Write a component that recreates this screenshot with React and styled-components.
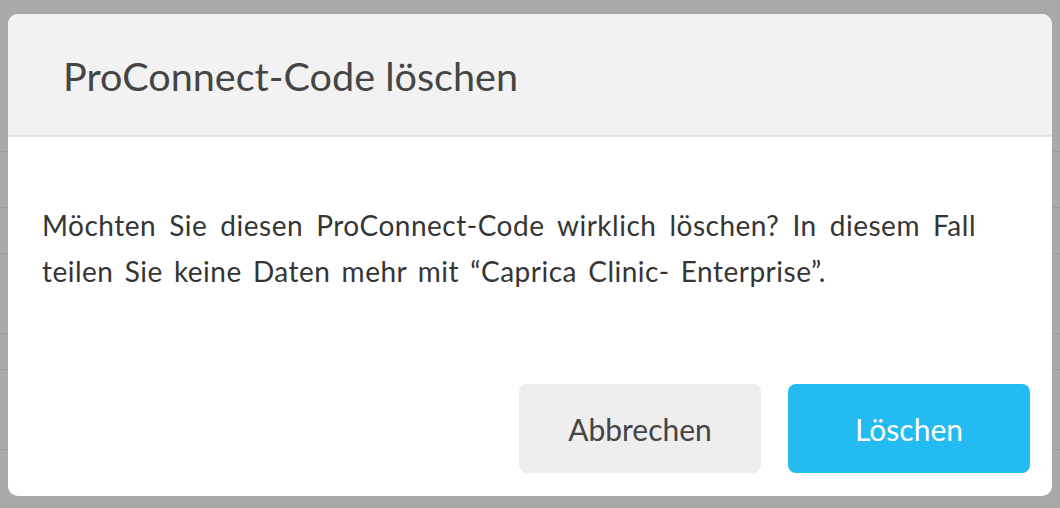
import React from "react";
import styled, { createGlobalStyle } from "styled-components";

const Global = createGlobalStyle`
  html, body { margin: 0; padding: 0; }
  body {
    width: 1060px;
    height: 508px;
    overflow: hidden;
    font-family: Lato, "Open Sans", sans-serif;
    background: #a9a9a9;
  }
  * { box-sizing: border-box; }
`;

const Screen = styled.div`
  position: relative;
  width: 1060px;
  height: 508px;
  background: #a9a9a9;
  overflow: hidden;
`;

const PageBehind = styled.div`
  display: flex;
  flex-direction: column;
`;

const PageRow = styled.div`
  height: ${(p) => p.$h}px;
  border-bottom: 1px solid #9c9c9c;
`;

const Overlay = styled.div`
  position: absolute;
  inset: 0;
  display: flex;
  justify-content: center;
  padding-top: 14px;
`;

const Dialog = styled.div`
  width: 1044px;
  height: 482px;
  background: #ffffff;
  border-radius: 10px;
  overflow: hidden;
  display: flex;
  flex-direction: column;
`;

const Header = styled.div`
  height: 123px;
  flex: none;
  background: #f2f2f2;
  border-bottom: 2px solid #e2e2e2;
  display: flex;
  align-items: center;
  padding-left: 55px;
`;

const Title = styled.h2`
  margin: 0;
  font-family: Lato, sans-serif;
  font-weight: 400;
  font-size: 39.6px;
  line-height: 1;
  color: #454545;
  padding-top: 2px;
`;

const Body = styled.div`
  flex: 1;
  display: flex;
  flex-direction: column;
  padding: 65px 22px 23px 34px;
`;

const Message = styled.p`
  margin: 0;
  width: 934px;
  font-size: 28px;
  line-height: 46px;
  letter-spacing: 0.5px;
  word-spacing: 3.5px;
  text-align: justify;
  color: #353535;
`;

const Actions = styled.div`
  margin-top: auto;
  display: flex;
  justify-content: flex-end;
  gap: 27px;
`;

const Button = styled.button`
  width: 242px;
  height: 89px;
  border: none;
  border-radius: 8px;
  font-family: Lato, sans-serif;
  font-size: 30px;
  font-weight: 400;
  cursor: pointer;
  background: ${(p) => (p.$primary ? "#22bbf2" : "#eeeeee")};
  color: ${(p) => (p.$primary ? "#ffffff" : "#444444")};
`;

export default function App() {
  const rows = [152, 56, 46, 80, 36, 80, 60];
  return (
    <>
      <Global />
      <Screen>
        <PageBehind>
          {rows.map((h, i) => (
            <PageRow key={i} $h={h} />
          ))}
        </PageBehind>
        <Overlay>
          <Dialog>
            <Header>
              <Title>ProConnect-Code löschen</Title>
            </Header>
            <Body>
              <Message>
                Möchten Sie diesen ProConnect-Code wirklich löschen? In diesem Fall
                teilen Sie keine Daten mehr mit “Caprica Clinic- Enterprise”.
              </Message>
              <Actions>
                <Button>Abbrechen</Button>
                <Button $primary>Löschen</Button>
              </Actions>
            </Body>
          </Dialog>
        </Overlay>
      </Screen>
    </>
  );
}
